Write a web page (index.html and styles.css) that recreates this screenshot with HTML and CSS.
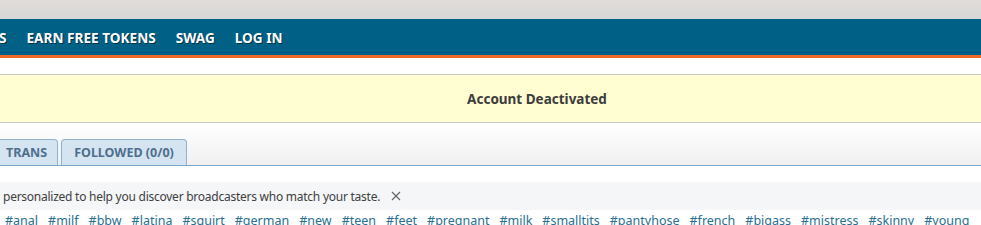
FILE: index.html
```html
<!DOCTYPE html>
<html>
<head>
<meta charset="utf-8">
<link rel="stylesheet" href="styles.css">
</head>
<body>
<div class="topbar"></div>
<nav class="nav">
  <a class="nav-item">S</a>
  <a class="nav-item">EARN FREE TOKENS</a>
  <a class="nav-item">SWAG</a>
  <a class="nav-item">LOG IN</a>
</nav>
<div class="accent"></div>
<div class="spacer"></div>
<div class="notice">Account Deactivated</div>
<div class="tabs">
  <div class="tab tab-cut">TRANS</div>
  <div class="tab">FOLLOWED (0/0)</div>
</div>
<div class="info">
  <span class="info-text">personalized to help you discover broadcasters who match your taste.</span>
  <svg class="close" width="10" height="10" viewBox="0 0 10 10"><path d="M1 1 L9 9 M9 1 L1 9" stroke="#666" stroke-width="1.2" fill="none"/></svg>
</div>
<div class="tags">
  <a>#anal</a><a>#milf</a><a>#bbw</a><a>#latina</a><a>#squirt</a><a>#german</a><a>#new</a><a>#teen</a><a>#feet</a><a>#pregnant</a><a>#milk</a><a>#smalltits</a><a>#pantyhose</a><a>#french</a><a>#bigass</a><a>#mistress</a><a>#skinny</a><a>#young</a>
</div>
</body>
</html>
```
FILE: styles.css
```css
html, body {
  margin: 0;
  padding: 0;
  background: #ffffff;
  overflow: hidden;
}
body {
  font-family: "Noto Sans", "DejaVu Sans", sans-serif;
  width: 981px;
  height: 225px;
}
.topbar {
  height: 19px;
  background: linear-gradient(#dfdcd9, #d8d7d6);
}
.nav {
  height: 36px;
  background: #006085;
  display: flex;
  align-items: center;
  gap: 20px;
  margin-left: -1px;
}
.nav-item {
  color: #ffffff;
  font-weight: bold;
  font-size: 13.6px;
  text-shadow: 1px 1px 0 #003347;
  white-space: nowrap;
}
.accent {
  height: 3px;
  background: #f26a2a;
}
.spacer {
  height: 16px;
  border-bottom: 1px solid #c7c7c7;
}
.notice {
  height: 47px;
  background: #fffdd1;
  border-bottom: 1px solid #c7c7c7;
  display: flex;
  align-items: center;
  justify-content: center;
  font-weight: bold;
  font-size: 13.5px;
  color: #3c3c3c;
  padding-left: 93px;
}
.tabs {
  height: 42px;
  background: linear-gradient(#ffffff, #f0f0f0);
  border-bottom: 1px solid #7ba7cc;
  display: flex;
  align-items: flex-end;
  gap: 3px;
}
.tab {
  height: 26px;
  box-sizing: border-box;
  background: #d4e4f1;
  border: 1px solid #8eb3d1;
  border-bottom: none;
  border-radius: 4px 4px 0 0;
  color: #4e6f8d;
  font-weight: bold;
  font-size: 12.5px;
  display: flex;
  align-items: center;
  padding: 0 12px;
  white-space: nowrap;
}
.tab-cut {
  margin-left: -10px;
  padding-left: 15px;
  padding-right: 10px;
}
.info {
  margin-top: 16px;
  height: 28px;
  background: #f5f6f8;
  display: flex;
  align-items: center;
  gap: 11px;
  padding-left: 3px;
  font-size: 12px;
  letter-spacing: -0.25px;
  color: #404040;
}
.close {
  flex: none;
}
.tags {
  display: flex;
  gap: 10px;
  padding-left: 5px;
  margin-top: 2px;
  font-size: 12.5px;
  white-space: nowrap;
}
.tags a {
  color: #2a6f8f;
}
```
